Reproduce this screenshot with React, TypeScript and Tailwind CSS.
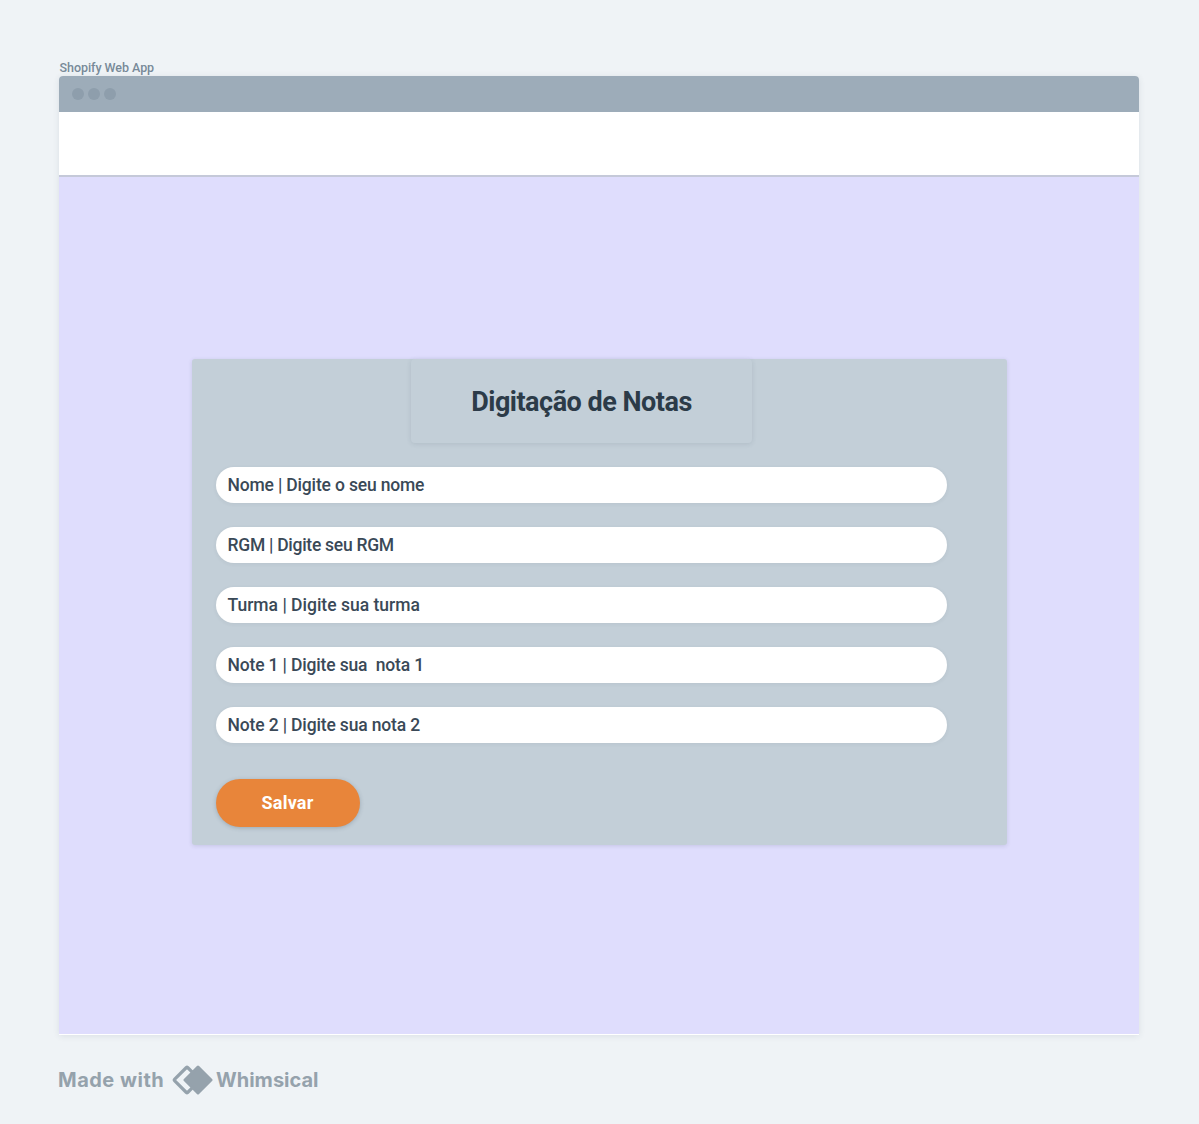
const fields = [
  { text: 'Nome | Digite o seu nome', tracking: 'tracking-[-0.17px]' },
  { text: 'RGM | Digite seu RGM', tracking: 'tracking-[-0.27px]' },
  { text: 'Turma | Digite sua turma', tracking: 'tracking-[0px]' },
  { text: 'Note 1 | Digite sua  nota 1', tracking: 'tracking-[-0.16px]' },
  { text: 'Note 2 | Digite sua nota 2', tracking: 'tracking-[-0.15px]' },
];

function WhimsicalMark() {
  return (
    <svg className="ml-[8px] h-[30px] w-[41px] shrink-0" viewBox="0 0 41 30" fill="none">
      <path
        d="M20.5 7.4 15.6 2.5Q15 2 14.4 2.5L2.5 14.4Q2 15 2.5 15.6L14.4 27.5Q15 28 15.6 27.5L20.5 22.6"
        stroke="#95a2ac"
        strokeWidth="3.2"
        strokeLinejoin="round"
      />
      <path
        d="M26 2 39 15 26 28 13 15Z"
        fill="#95a2ac"
        stroke="#95a2ac"
        strokeWidth="3"
        strokeLinejoin="round"
      />
    </svg>
  );
}

export default function App() {
  return (
    <div className="flex h-[1124px] w-[1199px] flex-col overflow-hidden bg-[#eff3f6] pt-[59px] pl-[59px] font-['Roboto',sans-serif]">
      <div className="h-[17px] pl-[0.5px] text-[12.5px] leading-[17px] font-medium tracking-[-0.05px] whitespace-pre text-[#788a99]">
        Shopify Web App
      </div>

      <main className="flex h-[959px] w-[1080px] flex-col overflow-hidden rounded-t-[4px] border-b border-white bg-white shadow-[0_1px_6px_rgba(40,60,75,0.10)]">
        <div className="flex h-[36px] shrink-0 items-center gap-[4px] bg-[#9dacb9] pl-[13px]">
          <span className="size-[12px] rounded-full bg-[#8e9eac]" />
          <span className="size-[12px] rounded-full bg-[#8e9eac]" />
          <span className="size-[12px] rounded-full bg-[#8e9eac]" />
        </div>
        <div className="h-[65px] shrink-0 border-b-2 border-[#c5c9d9] bg-white" />

        <div className="flex-1 bg-[#dfddfd] pt-[182px] pl-[133px]">
          <section className="flex h-[486px] w-[815px] flex-col rounded-[3px] bg-[#c3cfd8] pl-[24px] shadow-[0_1px_4px_rgba(40,60,75,0.14)]">
            <h1 className="ml-[195px] flex h-[84px] w-[341px] shrink-0 items-center justify-center rounded-[4px] bg-[#c3cfd8] pt-[2px] text-[27px] font-bold text-[#2c3b48] shadow-[0_1px_5px_rgba(40,60,75,0.12)]">
              <span className="tracking-[-0.5px] whitespace-pre">Digitação de Notas</span>
            </h1>
            <div className="mt-[24px] flex flex-col gap-[24px]">
              {fields.map((f) => (
                <div
                  key={f.text}
                  className="flex h-[36px] w-[731px] items-center rounded-full bg-white pt-px pl-[11.5px] text-[17.5px] font-medium text-[#3a4957] shadow-[0_1px_4px_rgba(40,60,75,0.07)]"
                >
                  <span className={`whitespace-pre ${f.tracking}`}>{f.text}</span>
                </div>
              ))}
            </div>
            <button className="mt-[36px] h-[48px] w-[144px] rounded-full bg-[#e8853a] pr-px pb-[2px] text-[18px] font-bold tracking-[0.2px] text-white shadow-[0_1px_4px_rgba(40,60,75,0.25)]">
              Salvar
            </button>
          </section>
        </div>
      </main>

      <footer className="mt-[30px] -ml-px flex h-[30px] items-center font-['Inter',sans-serif] text-[20px] font-bold text-[#95a2ac]">
        <span className="w-[106px] tracking-[0.5px] whitespace-pre">Made with</span>
        <WhimsicalMark />
        <span className="ml-[3px]">Whimsical</span>
      </footer>
    </div>
  );
}
